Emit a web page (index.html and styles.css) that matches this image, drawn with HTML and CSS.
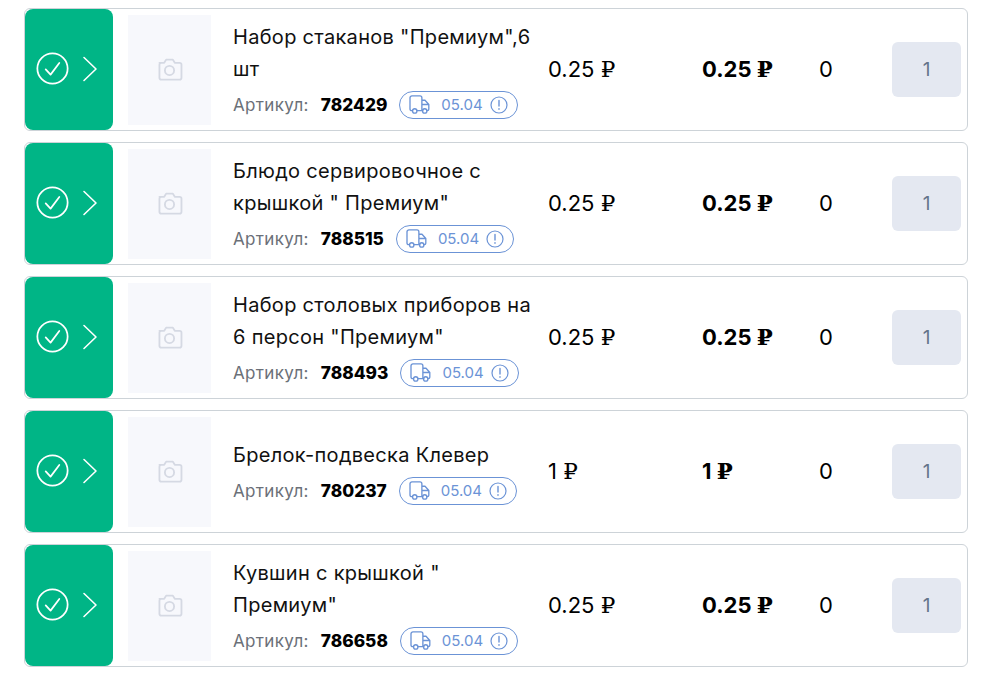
FILE: index.html
```html
<!doctype html>
<html lang="ru">
  <head>
    <meta charset="utf-8">
    <title>Заказ</title>
    <link rel="stylesheet" href="styles.css">
  </head>
  <body>
    <svg class="sprites" width="0" height="0">
      <symbol id="i-check" viewBox="0 0 34 34">
        <circle cx="17" cy="17" r="15.600" fill="none" stroke="currentColor" stroke-width="1.800"/>
        <path d="M10 18l5 5.300 9-12" fill="none" stroke="currentColor" stroke-width="1.800" stroke-linecap="round" stroke-linejoin="round"/>
      </symbol>
      <symbol id="i-arrow" viewBox="0 0 16 26">
        <path d="M2 1.500L14 13 2 24.500" fill="none" stroke="currentColor" stroke-width="1.600" stroke-linecap="round" stroke-linejoin="round"/>
      </symbol>
      <symbol id="i-camera" viewBox="0 0 28 24">
        <path d="M3.500 5h5l2-3.300h7l2 3.300h5a2 2 0 0 1 2 2v13.500a2 2 0 0 1-2 2h-19a2 2 0 0 1-2-2V7a2 2 0 0 1 2-2z" fill="none" stroke="currentColor" stroke-width="1.900" stroke-linejoin="round"/>
        <circle cx="14" cy="13" r="4.800" fill="none" stroke="currentColor" stroke-width="1.900"/>
      </symbol>
      <symbol id="i-truck" viewBox="0 0 22 20">
        <path d="M3.500 16.500H2.700a1.700 1.700 0 0 1-1.700-1.700V3a2 2 0 0 1 2-2h8.500a2 2 0 0 1 2 2v13.500H8.500M13.500 5.500h3.300l4 4.500v5a1.500 1.500 0 0 1-1.500 1.500h-.8M13.500 16.500h1M14 10h6.500" fill="none" stroke="currentColor" stroke-width="1.400" stroke-linecap="round" stroke-linejoin="round"/>
        <circle cx="6" cy="16.800" r="2.300" fill="none" stroke="currentColor" stroke-width="1.400"/>
        <circle cx="16.500" cy="16.800" r="2.300" fill="none" stroke="currentColor" stroke-width="1.400"/>
      </symbol>
      <symbol id="i-warn" viewBox="0 0 18 18">
        <circle cx="9" cy="9" r="8" fill="none" stroke="currentColor" stroke-width="1.200"/>
        <path d="M9 4.500v5.500M9 12.600v.6" fill="none" stroke="currentColor" stroke-width="1.400" stroke-linecap="round"/>
      </symbol>
    </svg>

    <div class="list">
      <div class="row">
        <div class="status">
          <svg class="ic-check"><use href="#i-check"/></svg>
          <svg class="ic-arrow"><use href="#i-arrow"/></svg>
        </div>
        <div class="thumb"><svg class="ic-camera"><use href="#i-camera"/></svg></div>
        <div class="info">
          <div class="title">Набор стаканов "Премиум",6 шт</div>
          <div class="meta">
            <span class="label">Артикул:</span>
            <span class="sku">782429</span>
            <span class="date">
              <svg class="ic-truck"><use href="#i-truck"/></svg>
              <span class="date-val">05.04</span>
              <svg class="ic-warn"><use href="#i-warn"/></svg>
            </span>
          </div>
        </div>
        <div class="price">0.25 <span class="rub">₽</span></div>
        <div class="total">0.25 <span class="rub">₽</span></div>
        <div class="count">0</div>
        <div class="qty">1</div>
      </div>

      <div class="row">
        <div class="status">
          <svg class="ic-check"><use href="#i-check"/></svg>
          <svg class="ic-arrow"><use href="#i-arrow"/></svg>
        </div>
        <div class="thumb"><svg class="ic-camera"><use href="#i-camera"/></svg></div>
        <div class="info">
          <div class="title">Блюдо сервировочное с крышкой " Премиум"</div>
          <div class="meta">
            <span class="label">Артикул:</span>
            <span class="sku">788515</span>
            <span class="date">
              <svg class="ic-truck"><use href="#i-truck"/></svg>
              <span class="date-val">05.04</span>
              <svg class="ic-warn"><use href="#i-warn"/></svg>
            </span>
          </div>
        </div>
        <div class="price">0.25 <span class="rub">₽</span></div>
        <div class="total">0.25 <span class="rub">₽</span></div>
        <div class="count">0</div>
        <div class="qty">1</div>
      </div>

      <div class="row">
        <div class="status">
          <svg class="ic-check"><use href="#i-check"/></svg>
          <svg class="ic-arrow"><use href="#i-arrow"/></svg>
        </div>
        <div class="thumb"><svg class="ic-camera"><use href="#i-camera"/></svg></div>
        <div class="info">
          <div class="title">Набор столовых приборов на 6 персон "Премиум"</div>
          <div class="meta">
            <span class="label">Артикул:</span>
            <span class="sku">788493</span>
            <span class="date">
              <svg class="ic-truck"><use href="#i-truck"/></svg>
              <span class="date-val">05.04</span>
              <svg class="ic-warn"><use href="#i-warn"/></svg>
            </span>
          </div>
        </div>
        <div class="price">0.25 <span class="rub">₽</span></div>
        <div class="total">0.25 <span class="rub">₽</span></div>
        <div class="count">0</div>
        <div class="qty">1</div>
      </div>

      <div class="row">
        <div class="status">
          <svg class="ic-check"><use href="#i-check"/></svg>
          <svg class="ic-arrow"><use href="#i-arrow"/></svg>
        </div>
        <div class="thumb"><svg class="ic-camera"><use href="#i-camera"/></svg></div>
        <div class="info">
          <div class="title">Брелок-подвеска Клевер</div>
          <div class="meta">
            <span class="label">Артикул:</span>
            <span class="sku">780237</span>
            <span class="date">
              <svg class="ic-truck"><use href="#i-truck"/></svg>
              <span class="date-val">05.04</span>
              <svg class="ic-warn"><use href="#i-warn"/></svg>
            </span>
          </div>
        </div>
        <div class="price">1 <span class="rub">₽</span></div>
        <div class="total">1 <span class="rub">₽</span></div>
        <div class="count">0</div>
        <div class="qty">1</div>
      </div>

      <div class="row">
        <div class="status">
          <svg class="ic-check"><use href="#i-check"/></svg>
          <svg class="ic-arrow"><use href="#i-arrow"/></svg>
        </div>
        <div class="thumb"><svg class="ic-camera"><use href="#i-camera"/></svg></div>
        <div class="info">
          <div class="title">Кувшин с крышкой " Премиум"</div>
          <div class="meta">
            <span class="label">Артикул:</span>
            <span class="sku">786658</span>
            <span class="date">
              <svg class="ic-truck"><use href="#i-truck"/></svg>
              <span class="date-val">05.04</span>
              <svg class="ic-warn"><use href="#i-warn"/></svg>
            </span>
          </div>
        </div>
        <div class="price">0.25 <span class="rub">₽</span></div>
        <div class="total">0.25 <span class="rub">₽</span></div>
        <div class="count">0</div>
        <div class="qty">1</div>
      </div>
    </div>
  </body>
</html>
```

FILE: styles.css
```css
body {
  margin: 0;
  background: #fff;
  color: #000;
  font-family: "Inter", "Noto Sans", sans-serif;
}

.sprites {
  display: block;
  height: 0;
}

.list {
  display: flex;
  flex-direction: column;
  gap: 11px;
  width: 944px;
  padding: 8px 0 0 24px;
}

.row {
  display: flex;
  align-items: center;
  height: 123px;
  box-sizing: border-box;
  border: 1px solid #cdd3d8;
  border-radius: 6px;
}

.status {
  display: flex;
  align-items: center;
  flex: none;
  align-self: stretch;
  box-sizing: border-box;
  width: 88px;
  padding: 0 0 2px 11px;
  gap: 13px;
  background: #00b586;
  border-radius: 8px;
  color: #fff;
}

.ic-check {
  width: 33px;
  height: 33px;
}

.ic-arrow {
  width: 16px;
  height: 26px;
}

.thumb {
  display: flex;
  align-items: center;
  justify-content: center;
  flex: none;
  width: 83px;
  height: 110px;
  margin-left: 15px;
  background: #f7f8fc;
  color: #d5d9e3;
}

.ic-camera {
  width: 27px;
  height: 23px;
}

.info {
  flex: none;
  box-sizing: border-box;
  width: 337px;
  padding: 3px 0 0 22px;
}

.title {
  font-size: 20px;
  letter-spacing: 0.3px;
  line-height: 32px;
  color: #111;
}

.meta {
  display: flex;
  align-items: center;
  margin-top: 3px;
  height: 34px;
  font-size: 17px;
}

.label {
  color: #6b7078;
  letter-spacing: 0.35px;
}

.sku {
  margin-left: 12px;
  font-weight: 800;
  font-size: 17.300px;
}

.date {
  display: flex;
  align-items: center;
  box-sizing: border-box;
  height: 28px;
  padding: 0 9px 0 9px;
  margin-left: 12px;
  border: 1px solid #6b93d6;
  border-radius: 14px;
  color: #6b93d6;
  font-size: 15px;
}

.date-val {
  margin: 0 7px 0 11px;
}

.ic-truck {
  width: 21px;
  height: 19px;
}

.ic-warn {
  width: 18px;
  height: 18px;
}

.price {
  flex: none;
  width: 154px;
  padding-bottom: 2px;
  font-size: 22px;
}

.total {
  flex: none;
  width: 117px;
  padding-bottom: 2px;
  font-size: 22px;
  font-weight: 700;
}

.rub {
  font-family: "DejaVu Serif", serif;
  font-size: 23px;
  font-weight: 400;
}

.total .rub {
  font-weight: 700;
}

.count {
  flex: none;
  width: 73px;
  padding-bottom: 2px;
  font-size: 22px;
}

.qty {
  display: flex;
  align-items: center;
  justify-content: center;
  flex: none;
  width: 69px;
  height: 55px;
  background: #e4e8f1;
  border-radius: 6px;
  color: #64748b;
  font-size: 19px;
}
```
